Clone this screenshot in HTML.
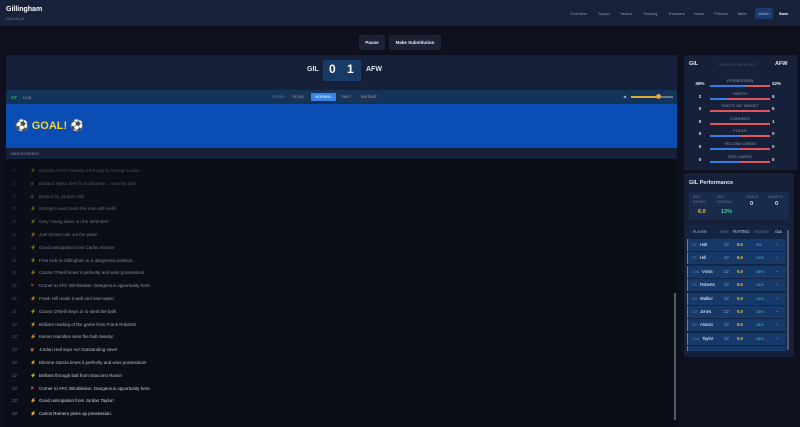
<!DOCTYPE html>
<html><head><meta charset="utf-8"><style>
*{margin:0;padding:0;box-sizing:border-box}
body{width:800px;height:427px;overflow:hidden;background:#0e111d;font-family:"Liberation Sans",sans-serif;color:#dfe6f0;position:relative}
.a{position:absolute}
.hdr{left:0;top:0;width:800px;height:27px;background:#17213a;border-bottom:1px solid #0a0d16}
.nav{top:11px;font-size:4px;color:#8d9ab0}
.btn{top:35px;height:15px;background:#1c2236;border-radius:2px;font-size:4.5px;color:#e8ecf2;font-weight:bold;text-align:center;line-height:15px}
.row{left:6px;width:668px;height:12.8px;font-size:4.5px;line-height:12.8px}
.row .t{position:absolute;left:6px;color:#6b7588}
.row .i{position:absolute;left:24px;color:#e8b13a;font-size:5px}
.row .x{position:absolute;left:33px;color:#d6dbe4}
.sl{font-size:4px;color:#8d9ab0;text-align:center}
.bar{height:2px;background:#e05560;position:absolute}
.bar i{display:block;height:2px;background:#3a7de0}
.pr{left:687px;width:99px;height:12px;background:#17396a;border-left:1.5px solid #2aa56b;font-size:4.2px;line-height:12px}
.pr span{position:absolute}
</style></head><body>
<div class="a hdr">
 <div class="a" style="left:6px;top:6px;font-size:7px;font-weight:bold;color:#fff">Gillingham</div>
 <div class="a" style="left:6px;top:17px;font-size:3.5px;color:#7a869a">2026-08-16</div>
 <div class="a nav" style="left:570px">Overview</div>
 <div class="a nav" style="left:598px">Squad</div>
 <div class="a nav" style="left:620px">Tactics</div>
 <div class="a nav" style="left:643px">Training</div>
 <div class="a nav" style="left:668px">Transfers</div>
 <div class="a nav" style="left:694px">News</div>
 <div class="a nav" style="left:714px">Fixtures</div>
 <div class="a nav" style="left:737px">Table</div>
 <div class="a" style="left:755px;top:8px;width:18px;height:11px;background:#1d3a6a;border-radius:2px;font-size:4px;color:#8fb4ff;text-align:center;line-height:11px">Watch</div>
 <div class="a nav" style="left:779px;color:#fff;font-weight:bold">Save</div>
</div>
<div class="a btn" style="left:359px;width:26px">Pause</div>
<div class="a btn" style="left:389px;width:52px">Make Substitution</div>

<div class="a" style="left:6px;top:55px;width:671px;height:36px;background:#172039"></div>
<div class="a" style="left:307px;top:66px;font-size:7px;font-weight:bold">GIL</div>
<div class="a" style="left:323px;top:60px;width:38px;height:21px;background:#183a66"></div>
<div class="a" style="left:329px;top:62px;font-size:12px;font-weight:bold;color:#fff">0</div>
<div class="a" style="left:340px;top:66px;font-size:5px;color:#7a869a">-</div>
<div class="a" style="left:347px;top:62px;font-size:12px;font-weight:bold;color:#fff">1</div>
<div class="a" style="left:366px;top:66px;font-size:7px;font-weight:bold">AFW</div>

<div class="a" style="left:6px;top:90px;width:671px;height:14px;background:#143359"></div>
<div class="a" style="left:11px;top:95px;font-size:4.5px;color:#3fd09a">22'</div>
<div class="a" style="left:23px;top:95px;font-size:4px;color:#8d9ab0">LIVE</div>
<div class="a" style="left:272px;top:95px;font-size:3.8px;color:#6b7a90">SPEED:</div>
<div class="a" style="left:288px;top:92.5px;width:20px;height:8px;background:#1c3354;font-size:3.8px;color:#9aa6b8;text-align:center;line-height:8px">SLOW</div>
<div class="a" style="left:311px;top:92.5px;width:25px;height:8px;background:#3d84e8;font-size:3.8px;color:#fff;text-align:center;line-height:8px">NORMAL</div>
<div class="a" style="left:339px;top:92.5px;width:15px;height:8px;background:#1c3354;font-size:3.8px;color:#9aa6b8;text-align:center;line-height:8px">FAST</div>
<div class="a" style="left:358px;top:92.5px;width:22px;height:8px;background:#1c3354;font-size:3.8px;color:#9aa6b8;text-align:center;line-height:8px">INSTANT</div>
<div class="a" style="left:623px;top:94px;font-size:4px;color:#aab">◀</div>
<div class="a" style="left:631px;top:95.5px;width:42px;height:2px;background:#6a7890"></div>
<div class="a" style="left:631px;top:95.5px;width:28px;height:2px;background:#e0a838"></div>
<div class="a" style="left:656px;top:94px;width:5px;height:5px;border-radius:50%;background:#e0a838"></div>

<div class="a" style="left:6px;top:104px;width:671px;height:44px;background:#0a4db4"></div>
<div class="a" style="left:15px;top:119px;font-size:11px;font-weight:bold;color:#f2d33a">⚽ GOAL! ⚽</div>

<div class="a" style="left:6px;top:148px;width:671px;height:11px;background:#172039"></div>
<div class="a" style="left:11px;top:151.5px;font-size:3.6px;color:#8d9ab0">MATCH EVENTS</div>
<div class="a" style="left:6px;top:159px;width:671px;height:268px;background:#0a0e17"></div>
<div class="a" style="left:674px;top:293px;width:2px;height:127px;background:#555c68"></div>

<div id="ev"></div>

<div class="a" style="left:684px;top:55px;width:113px;height:115px;background:#172039;border-radius:2px"></div>
<div class="a" style="left:689px;top:61px;font-size:5.5px;font-weight:bold">GIL</div>
<div class="a" style="left:719px;top:62px;font-size:4px;color:#4a5570">MATCH STATISTICS</div>
<div class="a" style="left:775px;top:61px;font-size:5.5px;font-weight:bold">AFW</div>
<div id="st"></div>

<div class="a" style="left:684px;top:173px;width:110px;height:184px;background:#172039;border-radius:2px"></div>
<div class="a" style="left:689px;top:180px;font-size:5.5px;font-weight:bold">GIL Performance</div>
<div class="a" style="left:689px;top:192px;width:100px;height:28px;background:#1a2a4a"></div>
<div class="a" style="left:693px;top:195px;font-size:3.5px;color:#6b7a90;line-height:5px">AVG<br>RATING</div>
<div class="a" style="left:698px;top:209px;font-size:5.5px;font-weight:bold;color:#e8c23a">6.0</div>
<div class="a" style="left:717px;top:195px;font-size:3.5px;color:#6b7a90;line-height:5px">AVG<br>FATIGUE</div>
<div class="a" style="left:721px;top:209px;font-size:5.5px;font-weight:bold;color:#3fd09a">13%</div>
<div class="a" style="left:746px;top:195px;font-size:3.5px;color:#6b7a90">GOALS</div>
<div class="a" style="left:750px;top:201px;font-size:5.5px;font-weight:bold">0</div>
<div class="a" style="left:768px;top:195px;font-size:3.5px;color:#6b7a90">ASSISTS</div>
<div class="a" style="left:775px;top:201px;font-size:5.5px;font-weight:bold">0</div>
<div class="a" style="left:687px;top:225px;width:100px;height:126px;background:#142544"></div>
<div class="a" style="left:693px;top:230px;font-size:3.5px;color:#b8c2d2">PLAYER</div>
<div class="a" style="left:720px;top:230px;font-size:3.5px;color:#6b7a90">MINS</div>
<div class="a" style="left:733px;top:229px;font-size:4.5px;color:#b8c2d2">RATING</div>
<div class="a" style="left:754px;top:230px;font-size:3.5px;color:#6b7a90">FATIGUE</div>
<div class="a" style="left:775px;top:229px;font-size:4px;color:#dfe6f0">G/A</div>
<div class="a" style="left:787px;top:230px;width:2px;height:120px;background:#555c68"></div>
<div id="pl"></div>

<script>
var ev=[["⚡","Giandro Pérez threads it through to George Lewis!"],["◉","Edward Taylor tries from distance... over the bar!"],["◉","Denied by Jordan Hall!"],["⚡","George Lewis beats the man with skill!"],["⚡","Gary Young takes on the defender!"],["⚡","Joel Green cuts out the pass!"],["⚡","Good anticipation from Carlos Alonso!"],["⚡","Free kick to Gillingham in a dangerous position."],["⚡","Ciaran O'Neill times it perfectly and wins possession!"],["⚑","Corner to AFC Wimbledon. Dangerous opportunity here."],["⚡","Frank Hill reads it well and intercepts!"],["⚡","Ciaran O'Neill steps in to steal the ball!"],["⚡","Brilliant reading of the game from Frank Roberts!"],["⚡","Kieran Hamilton wins the ball cleanly!"],["◉","Jordan Hall says no! Outstanding save!"],["⚡","Etienne Garcia times it perfectly and wins possession!"],["⚡","Brilliant through ball from Giacomo Rossi!"],["⚑","Corner to AFC Wimbledon. Dangerous opportunity here."],["⚡","Good anticipation from Jordan Taylor!"],["⚡","Carlos Romero picks up possession."]];
var h="";ev.forEach(function(e,i){var o=(0.3+0.7*i/19).toFixed(2);var ic=e[0]=="⚑"?"color:#e04050":(e[0]=="◉"?"color:#d08060":"");
h+='<div class="a row" style="top:'+(165+i*12.8)+'px;opacity:'+o+'"><span class="t">'+(i<12?21:22)+'\'</span><span class="i" style="'+ic+'">'+e[0]+'</span><span class="x">'+e[1]+'</span></div>';});
document.getElementById("ev").innerHTML=h;
var st=[["58%","POSSESSION","42%",58],["2","SHOTS","5",29],["0","SHOTS ON TARGET","5",0],["0","CORNERS","1",0],["0","FOULS","0",50],["0","YELLOW CARDS","0",50],["0","RED CARDS","0",50]];
h="";st.forEach(function(s,i){var y=80+i*12.6;
h+='<div class="a" style="left:695px;top:'+(y+1)+'px;font-size:4.5px;font-weight:bold;width:10px;text-align:center">'+s[0]+'</div>';
h+='<div class="a sl" style="left:710px;top:'+(y-2)+'px;width:60px">'+s[1]+'</div>';
h+='<div class="a" style="left:772px;top:'+(y+1)+'px;font-size:4.5px;font-weight:bold">'+s[2]+'</div>';
h+='<div class="bar" style="left:710px;top:'+(y+5)+'px;width:60px"><i style="width:'+s[3]+'%"></i></div>';});
document.getElementById("st").innerHTML=h;
var pl=[["GK","Hall","3%"],["CB","Hill","12%"],["CDM","Vieira","15%"],["CB","Roberts","14%"],["RM","Walker","14%"],["CM","Jones","13%"],["RM","Alonso","15%"],["CAM","Taylor","15%"]];
h="";pl.forEach(function(p,i){var y=239+i*13.4;
h+='<div class="a pr" style="top:'+y+'px"><span style="left:4px;color:#6b7a90;font-size:3.3px">'+p[0]+'</span><span style="left:'+(p[0].length>2?14:12)+'px;color:#fff">'+p[1]+'</span><span style="left:36px;color:#8d9ab0">22\'</span><span style="left:49px;color:#e8c23a;font-weight:bold">6.0</span><span style="left:68px;color:#3fd09a;font-size:3.8px">'+p[2]+'</span><span style="left:88px;color:#aab">–</span></div>';});
h+='<div class="a pr" style="top:'+(239+8*13.4)+'px;height:5px"></div>';
document.getElementById("pl").innerHTML=h;
</script>
</body></html>
